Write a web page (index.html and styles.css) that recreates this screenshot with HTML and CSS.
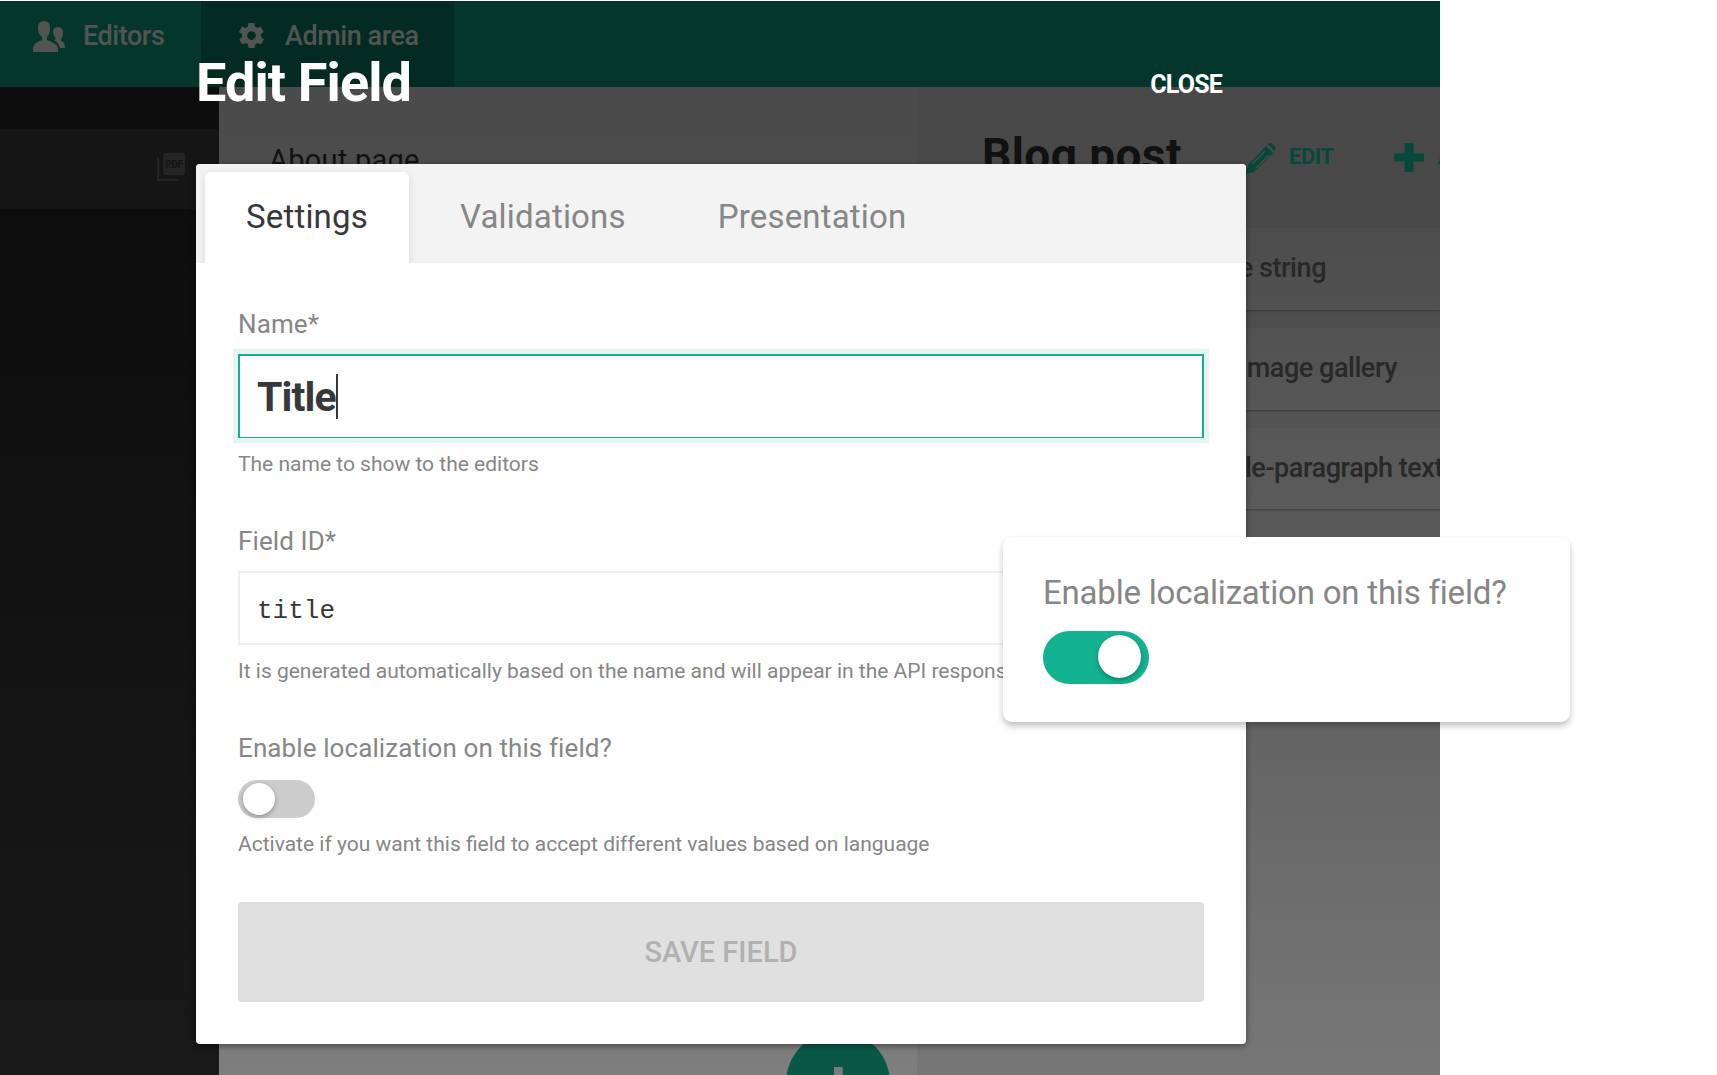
FILE: index.html
```html
<!DOCTYPE html>
<html lang="en">
<head>
<meta charset="utf-8">
<title>Edit Field</title>
<link rel="stylesheet" href="styles.css">
</head>
<body>
<div class="app">
  <header class="topbar">
    <div class="nav nav-editors">
      <svg class="icon-people" viewBox="0 0 32 31" fill="currentColor"><path d="M11 0c4 0 6 3 6 7 0 4-1 7-3 9v3c5 2 11 4 11 9v3H0v-3c0-5 4-7 9-9v-3c-3-2-4-5-4-9 0-4 2-7 6-7z"/><path d="M25 6c3 0 5 2 5 6 0 3-1 5-2 6v2c3 1 4 3 4 7h-5c-1-4-3-6-6-8 1 0 2-1 2-1-1-2-3-4-3-7 0-3 2-5 5-5z"/></svg>
      <span>Editors</span>
    </div>
    <div class="nav nav-admin">
      <svg class="icon-gear" viewBox="2 1.8 20 20.4" fill="currentColor"><path d="M19.4 13c0-.3.1-.6.1-1s0-.7-.1-1l2.1-1.7c.2-.2.2-.4.1-.6l-2-3.5c-.1-.2-.4-.3-.6-.2l-2.5 1c-.5-.4-1.1-.7-1.7-1l-.4-2.6c0-.2-.2-.4-.5-.4h-4c-.2 0-.4.2-.5.4l-.4 2.6c-.6.3-1.2.6-1.7 1l-2.5-1c-.2-.1-.5 0-.6.2l-2 3.5c-.1.2-.1.5.1.6L4.6 11c0 .3-.1.6-.1 1s0 .7.1 1l-2.1 1.7c-.2.2-.2.4-.1.6l2 3.5c.1.2.4.3.6.2l2.5-1c.5.4 1.1.7 1.7 1l.4 2.6c0 .2.2.4.5.4h4c.2 0 .4-.2.5-.4l.4-2.6c.6-.3 1.2-.6 1.7-1l2.5 1c.2.1.5 0 .6-.2l2-3.5c.1-.2.1-.5-.1-.6zM12 15.500a3.500 3.500 0 1 1 0-7 3.500 3.500 0 0 1 0 7z"/></svg>
      <span>Admin area</span>
    </div>
  </header>
  <div class="columns">
    <aside class="sidebar">
      <div class="side-row">
        <svg class="icon-pdf" viewBox="0 0 28 28"><path d="M1 5v22h21" fill="none" stroke="currentColor" stroke-width="2.500"/><rect x="6" width="22" height="22" rx="2" fill="currentColor"/><text x="8" y="15" class="pdf-text" textLength="18">PDF</text></svg>
      </div>
    </aside>
    <section class="pages">
      <div class="page-name">About page</div>
      <div class="fab"><svg viewBox="0 0 40 40" fill="currentColor"><path d="M15 0h11v15h14v10H26v15H15V25H0V15h15z"/></svg></div>
    </section>
    <section class="fields">
      <div class="fields-head">
        <h2>Blog post</h2>
        <svg class="icon-pencil" viewBox="0 0 30 31"><path d="M20 3l7 7L8 29l-8 2 2-9z" fill="currentColor"/><path d="M22 1.500c2-2 4-1.500 6 .500s2 4 .500 6z" fill="currentColor"/><path d="M6 21L19 8M10 25L23 12" stroke="#494949" stroke-width="1.500"/></svg>
        <span class="action">EDIT</span>
        <svg class="icon-plus" viewBox="0 0 30 29" fill="currentColor"><path d="M10.500 0h9v10.500H30v8H19.500V29h-9V18.500H0v-8h10.500z"/></svg>
        <span class="action">ADD</span>
      </div>
      <div class="card card-string">Single-line string</div>
      <div class="card card-gallery">Image gallery</div>
      <div class="card card-text">Multiple-paragraph text</div>
    </section>
  </div>
</div>

<div class="dialog">
  <div class="dialog-head">
    <h1>Edit Field</h1>
    <span class="close">CLOSE</span>
  </div>
  <div class="panel">
    <nav class="tabs">
      <div class="tab tab-active">Settings</div>
      <div class="tab">Validations</div>
      <div class="tab">Presentation</div>
    </nav>
    <form class="form">
      <div class="label">Name*</div>
      <div class="input input-name"><span>Title</span><i class="caret"></i></div>
      <div class="help help-name">The name to show to the editors</div>
      <div class="label label-id">Field ID*</div>
      <div class="input input-id">title</div>
      <div class="help help-id">It is generated automatically based on the name and will appear in the API responses</div>
      <div class="label label-loc">Enable localization on this field?</div>
      <div class="switch"><i></i></div>
      <div class="help help-loc">Activate if you want this field to accept different values based on language</div>
      <div class="save"><span>SAVE FIELD</span></div>
    </form>
  </div>
</div>

<div class="callout">
  <div class="callout-label">Enable localization on this field?</div>
  <div class="switch switch-on"><i></i></div>
</div>
</body>
</html>
```
FILE: styles.css
```css
* { box-sizing: border-box; }
body {
  margin: 0;
  width: 1717px;
  height: 1075px;
  position: relative;
  overflow: hidden;
  background: #fff;
  font-family: Roboto, "Liberation Sans", sans-serif;
  white-space: nowrap;
}
h1, h2 { margin: 0; }
svg { display: block; flex: none; }

/* dimmed application */
.app {
  width: 1440px;
  height: 1074px;
  margin-top: 1px;
  display: flex;
  flex-direction: column;
  overflow: hidden;
}
.topbar {
  height: 86px;
  flex: none;
  display: flex;
  background: #05362b;
  color: #515552;
  font-size: 27px;
  font-weight: 500;
  letter-spacing: -.45px;
}
.nav { display: flex; align-items: flex-start; line-height: 32px; padding-top: 19px; }
.nav-editors { width: 201px; padding-left: 33px; gap: 18px; }
.nav-admin { width: 253px; padding-left: 38px; gap: 21px; background: #042b22; }
.icon-people { width: 32px; height: 31px; margin-top: 1px; }
.icon-gear { width: 25px; height: 27px; margin-top: 2px; }
.columns { flex: 1; display: flex; min-height: 0; }
.sidebar {
  width: 219px;
  padding-top: 42px;
  background: linear-gradient(#0d0d0d, #0f0f0f 30%, #191919);
}
.side-row {
  height: 80px;
  background: #151515;
  padding: 24px 34px 0 0;
  display: flex;
  justify-content: flex-end;
  color: #242424;
}
.icon-pdf { width: 28px; height: 28px; }
.pdf-text { font-size: 10px; font-weight: 700; fill: #151515; }
.pages {
  width: 698px;
  display: flex;
  flex-direction: column;
  align-items: flex-start;
  justify-content: space-between;
  overflow: hidden;
  background: linear-gradient(#4b4b4b, #4d4d4d 15%, #7e7e7e);
}
.page-name { margin: 57px 0 0 50px; font-size: 29px; letter-spacing: .25px; line-height: 32px; color: #111; }
.fab {
  width: 104px;
  height: 104px;
  margin: 0 0 -60px 567px;
  border-radius: 50%;
  background: #085747;
  color: #7b7b7b;
  display: flex;
  align-items: center;
  justify-content: center;
}
.fab svg { width: 32px; height: 32px; }
.fields { flex: 1; min-width: 0; overflow: hidden; background: linear-gradient(#484848, #494949 15%, #777); }
.fields-head { height: 141px; padding: 42px 0 0 65px; display: flex; align-items: flex-start; color: #06483a; }
.fields-head h2 {
  flex: none;
  width: 264px;
  margin-top: -4px;
  font-size: 46px;
  line-height: 60px;
  font-weight: 700;
  letter-spacing: .4px;
  color: #111;
}
.icon-pencil { width: 30px; height: 31px; margin-top: 14px; }
.action { font-size: 22px; line-height: 26px; font-weight: 700; letter-spacing: -.5px; margin: 15px 0 0 13px; }
.icon-plus { width: 30px; height: 29px; margin: 14px 0 0 61px; }
.card {
  height: 82px;
  margin: 0 0 18px 48px;
  display: flex;
  justify-content: flex-end;
  background: rgba(255, 255, 255, .025);
  box-shadow: 0 1px 2px rgba(0, 0, 0, .3);
  font-size: 27px;
  line-height: 32px;
  font-weight: 500;
  letter-spacing: -.45px;
  color: #282828;
  padding-top: 24px;
}
.card-string { padding-right: 114px; }
.card-gallery { padding-right: 43px; }
.card-text { height: 81px; padding-right: 0; margin-right: -3px; }

/* modal dialog */
.dialog { position: absolute; left: 196px; top: 50px; width: 1050px; }
.dialog-head { height: 114px; display: flex; justify-content: space-between; color: #fff; }
.dialog-head h1 { font-size: 54px; line-height: 66px; font-weight: 700; letter-spacing: -.9px; }
.close { font-size: 25px; line-height: 30px; font-weight: 700; letter-spacing: -.8px; margin: 20px 24px 0 0; }
.panel {
  height: 880px;
  border-radius: 4px;
  overflow: hidden;
  background: #fefefe;
  box-shadow: 0 2px 6px rgba(0, 0, 0, .4);
}
.tabs { height: 99px; padding: 8px 0 0 9px; display: flex; background: #f3f3f3; overflow: hidden; }
.tab {
  height: 100px;
  padding: 26px 41px 0 51px;
  font-size: 33px;
  line-height: 38px;
  letter-spacing: .18px;
  color: #868686;
}
.tab-active {
  width: 204px;
  padding: 26px 0 0 41px;
  border-radius: 5px 5px 0 0;
  background: #fefefe;
  color: #36383c;
  box-shadow: 0 2px 8px rgba(0, 0, 0, .12);
}
.form { padding: 46px 42px 0; }
.label { font-size: 26px; line-height: 30px; letter-spacing: .1px; color: #868686; }
.input { width: 966px; background: #fefefe; color: #36383c; display: flex; align-items: center; padding-left: 17px; }
.input-name {
  height: 84px;
  margin-top: 15px;
  border: 2px solid #18af91;
  border-bottom-width: 1px;
  box-shadow: 0 0 0 5px #e6f5f1;
  font-size: 41px;
  font-weight: 700;
  letter-spacing: -.9px;
}
.caret { width: 2px; height: 45px; background: #36383c; }
.help { font-size: 21px; line-height: 26px; color: #868686; }
.help-name { margin-top: 13px; }
.label-id { margin-top: 49px; }
.input-id {
  height: 74px;
  margin-top: 15px;
  padding-top: 5px;
  border: 2px solid #eee;
  font-family: "Liberation Mono", monospace;
  font-size: 26px;
}
.help-id { margin-top: 13px; }
.label-loc { margin-top: 49px; }
.switch { width: 77px; height: 38px; margin-top: 17px; padding: 3px 5px; border-radius: 19px; background: #ccc; display: flex; }
.switch i { width: 32px; height: 32px; border-radius: 50%; background: #fefefe; box-shadow: 0 2px 5px rgba(0, 0, 0, .3); }
.help-loc { margin-top: 13px; }
.save {
  height: 100px;
  margin-top: 45px;
  border-radius: 4px;
  background: #e0e0e0;
  color: #b1b1b1;
  font-size: 29px;
  font-weight: 500;
  display: flex;
  align-items: center;
  justify-content: center;
}

/* enlarged switch floating over the dialog */
.callout {
  position: absolute;
  left: 1003px;
  top: 537px;
  width: 567px;
  height: 185px;
  padding: 37px 40px;
  border-radius: 9px;
  background: #fefefe;
  box-shadow: 0 4px 6px rgba(0, 0, 0, .24);
}
.callout-label { font-size: 33px; line-height: 38px; letter-spacing: -.2px; color: #868686; }
.switch-on { width: 106px; height: 53px; margin-top: 19px; padding: 4px 8px; border-radius: 27px; background: #13b291; justify-content: flex-end; }
.switch-on i { width: 43px; height: 43px; }
```
